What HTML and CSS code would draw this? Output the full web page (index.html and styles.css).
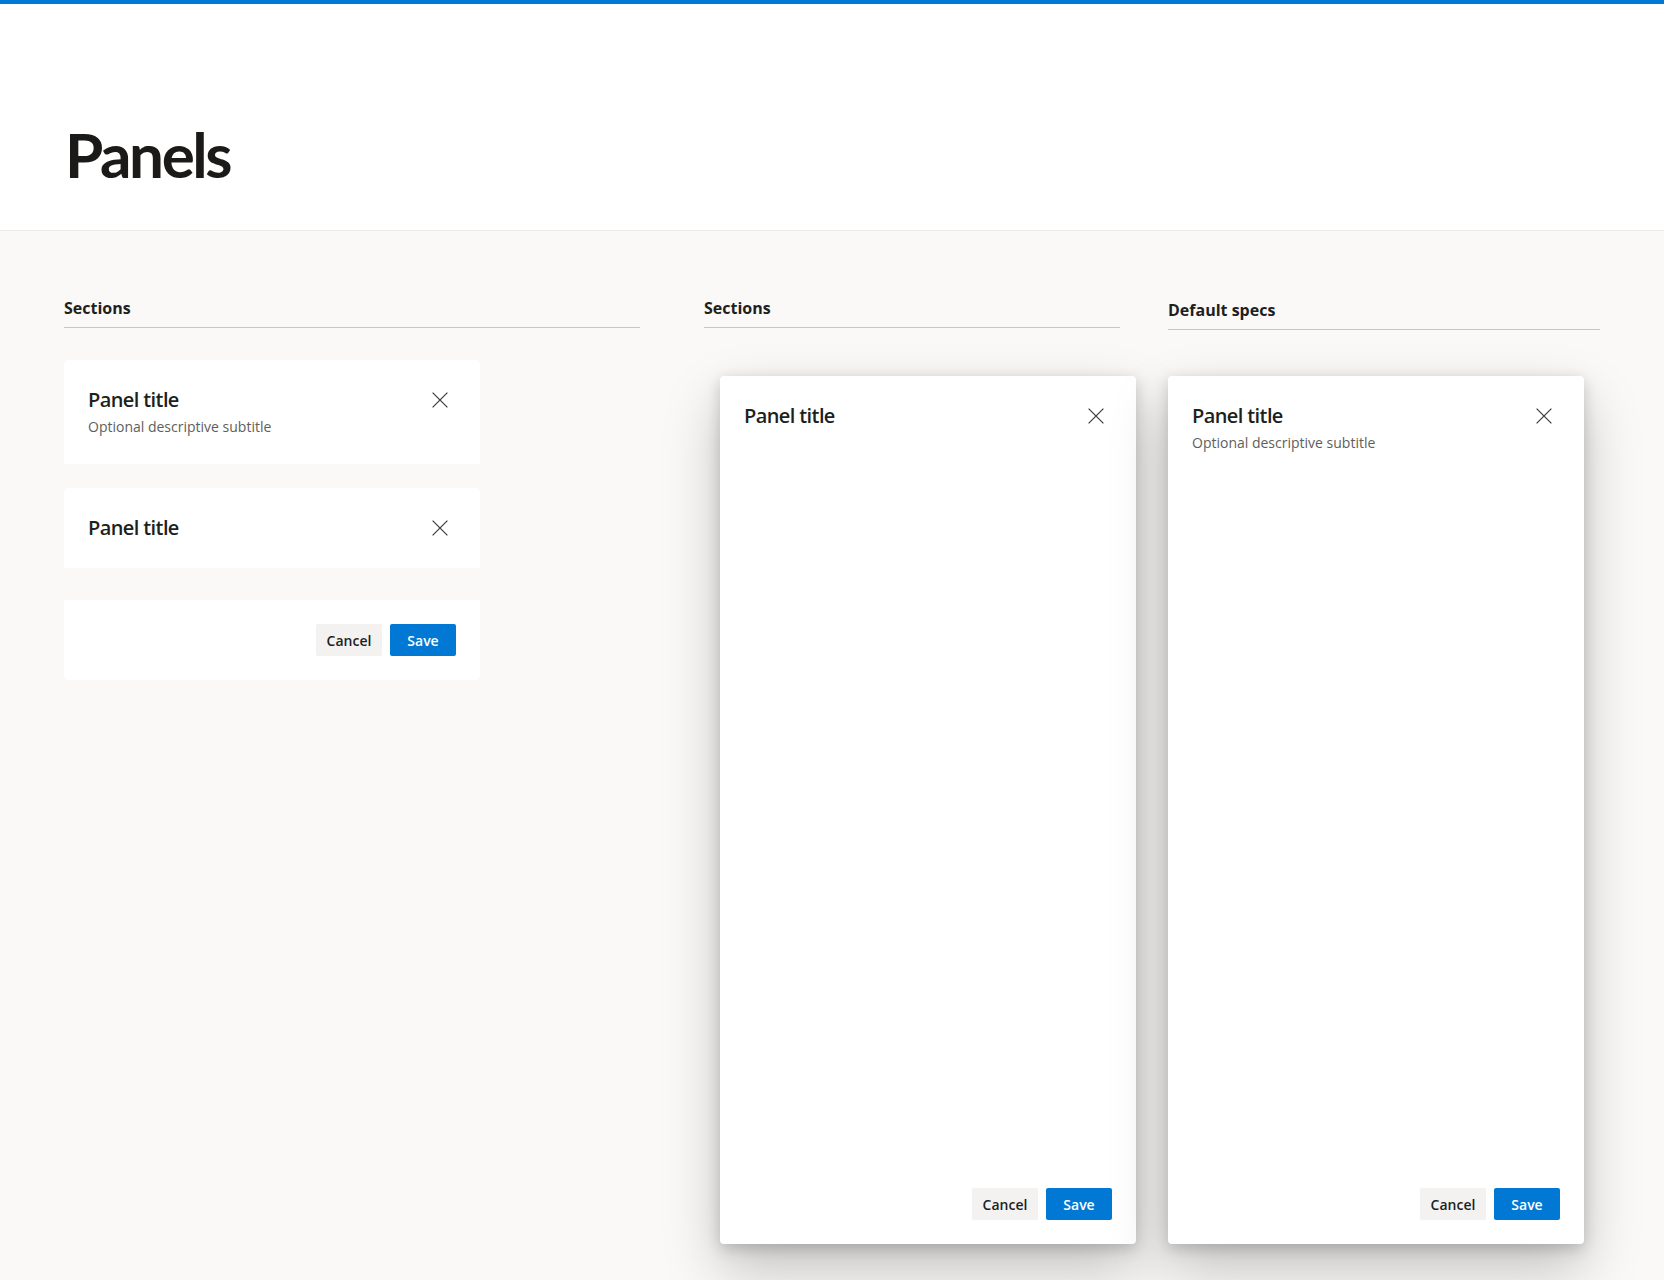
FILE: index.html
```html
<!DOCTYPE html>
<html lang="en">
<head>
<meta charset="utf-8">
<title>Panels</title>
<link rel="stylesheet" href="styles.css">
</head>
<body>
<div class="topbar"></div>
<header class="page-header">
  <h1 class="page-title">Panels</h1>
</header>
<main class="content">
  <section class="col col-left">
    <h2 class="col-heading">Sections</h2>
    <div class="stack">
      <div class="card card-top">
        <div class="title-row">
          <div class="panel-title">Panel title</div>
          <button class="close-btn" aria-label="Close">
            <svg viewBox="0 0 16 16" width="16" height="16"><path d="M0.6 0.6 L15.4 15.4 M15.4 0.6 L0.6 15.4" /></svg>
          </button>
        </div>
        <div class="panel-subtitle">Optional descriptive subtitle</div>
      </div>
      <div class="card card-top card-plain">
        <div class="title-row">
          <div class="panel-title">Panel title</div>
          <button class="close-btn" aria-label="Close">
            <svg viewBox="0 0 16 16" width="16" height="16"><path d="M0.6 0.6 L15.4 15.4 M15.4 0.6 L0.6 15.4" /></svg>
          </button>
        </div>
      </div>
      <div class="card card-bottom">
        <div class="actions">
          <button class="btn btn-default">Cancel</button>
          <button class="btn btn-primary">Save</button>
        </div>
      </div>
    </div>
  </section>

  <section class="col col-mid">
    <h2 class="col-heading">Sections</h2>
    <div class="panel panel-offset">
      <div class="panel-header">
        <div class="title-row">
          <div class="panel-title">Panel title</div>
          <button class="close-btn" aria-label="Close">
            <svg viewBox="0 0 16 16" width="16" height="16"><path d="M0.6 0.6 L15.4 15.4 M15.4 0.6 L0.6 15.4" /></svg>
          </button>
        </div>
      </div>
      <div class="panel-body"></div>
      <div class="panel-footer">
        <div class="actions">
          <button class="btn btn-default">Cancel</button>
          <button class="btn btn-primary">Save</button>
        </div>
      </div>
    </div>
  </section>

  <section class="col col-right">
    <h2 class="col-heading col-heading-low">Default specs</h2>
    <div class="panel panel-right">
      <div class="panel-header">
        <div class="title-row">
          <div class="panel-title">Panel title</div>
          <button class="close-btn" aria-label="Close">
            <svg viewBox="0 0 16 16" width="16" height="16"><path d="M0.6 0.6 L15.4 15.4 M15.4 0.6 L0.6 15.4" /></svg>
          </button>
        </div>
        <div class="panel-subtitle">Optional descriptive subtitle</div>
      </div>
      <div class="panel-body"></div>
      <div class="panel-footer">
        <div class="actions">
          <button class="btn btn-default">Cancel</button>
          <button class="btn btn-primary">Save</button>
        </div>
      </div>
    </div>
  </section>
</main>
</body>
</html>
```

FILE: styles.css
```css
html {
  background: #faf9f8;
}

body {
  margin: 0;
  min-height: 100vh;
  background: #faf9f8;
  font-family: "Open Sans", "Noto Sans", sans-serif;
  color: #201f1e;
}

.topbar {
  height: 4px;
  background: #0078d4;
}

.page-header {
  background: #ffffff;
  border-bottom: 1px solid #edebe9;
  padding: 114px 64px 40px;
}

.page-title {
  margin: 0;
  font-family: Lato, "Open Sans", sans-serif;
  font-size: 62px;
  line-height: 72px;
  font-weight: 700;
  letter-spacing: -2.4px;
  color: #1b1a19;
  padding-left: 1px;
}

.content {
  display: flex;
  align-items: flex-start;
  padding: 66px 64px 36px;
}

.col-left {
  width: 576px;
}

.col-mid {
  width: 416px;
  margin-left: 64px;
}

.col-right {
  width: 432px;
  margin-left: 48px;
}

.col-heading {
  margin: 0;
  font-size: 16px;
  line-height: 22px;
  font-weight: 700;
  padding-bottom: 8px;
  border-bottom: 1px solid #c8c6c4;
  color: #201f1e;
}

.col-heading-low {
  padding-top: 2px;
}

.stack {
  margin-top: 32px;
  width: 416px;
  display: flex;
  flex-direction: column;
}

.card {
  background: #ffffff;
  padding: 24px 24px 27px;
}

.card-top {
  border-radius: 4px 4px 0 0;
}

.card-plain {
  padding-bottom: 24px;
  margin-top: 24px;
}

.card-bottom {
  border-radius: 0 0 4px 4px;
  padding: 24px;
  margin-top: 32px;
}

.title-row {
  display: flex;
  align-items: center;
  justify-content: space-between;
  height: 32px;
}

.panel-title {
  font-size: 20px;
  line-height: 28px;
  font-weight: 600;
  color: #201f1e;
  letter-spacing: -0.6px;
}

.panel-subtitle {
  font-size: 14px;
  line-height: 20px;
  color: #605e5c;
  padding-top: 1px;
}

.close-btn {
  width: 32px;
  height: 32px;
  padding: 0;
  border: 0;
  background: transparent;
  display: flex;
  align-items: center;
  justify-content: center;
}

.close-btn svg {
  display: block;
  fill: none;
  stroke: #323130;
  stroke-width: 1.1;
}

.actions {
  display: flex;
  justify-content: flex-end;
  gap: 8px;
}

.btn {
  width: 66px;
  height: 32px;
  border: 0;
  border-radius: 2px;
  padding: 0;
  font-family: "Open Sans", "Noto Sans", sans-serif;
  font-size: 14px;
  font-weight: 600;
}

.btn-default {
  background: #f3f2f1;
  color: #201f1e;
}

.btn-primary {
  background: #0078d4;
  color: #ffffff;
}

.panel {
  width: 416px;
  height: 868px;
  background: #ffffff;
  border-radius: 4px;
  box-shadow: 0 25.6px 57.6px 0 rgba(0, 0, 0, 0.22), 0 4.8px 14.4px 0 rgba(0, 0, 0, 0.18);
  display: flex;
  flex-direction: column;
}

.panel-offset {
  margin-top: 48px;
  margin-left: 16px;
}

.panel-right {
  margin-top: 46px;
}

.panel-header {
  padding: 24px 24px 0;
}

.panel-body {
  flex: 1;
}

.panel-footer {
  padding: 24px;
}
```
